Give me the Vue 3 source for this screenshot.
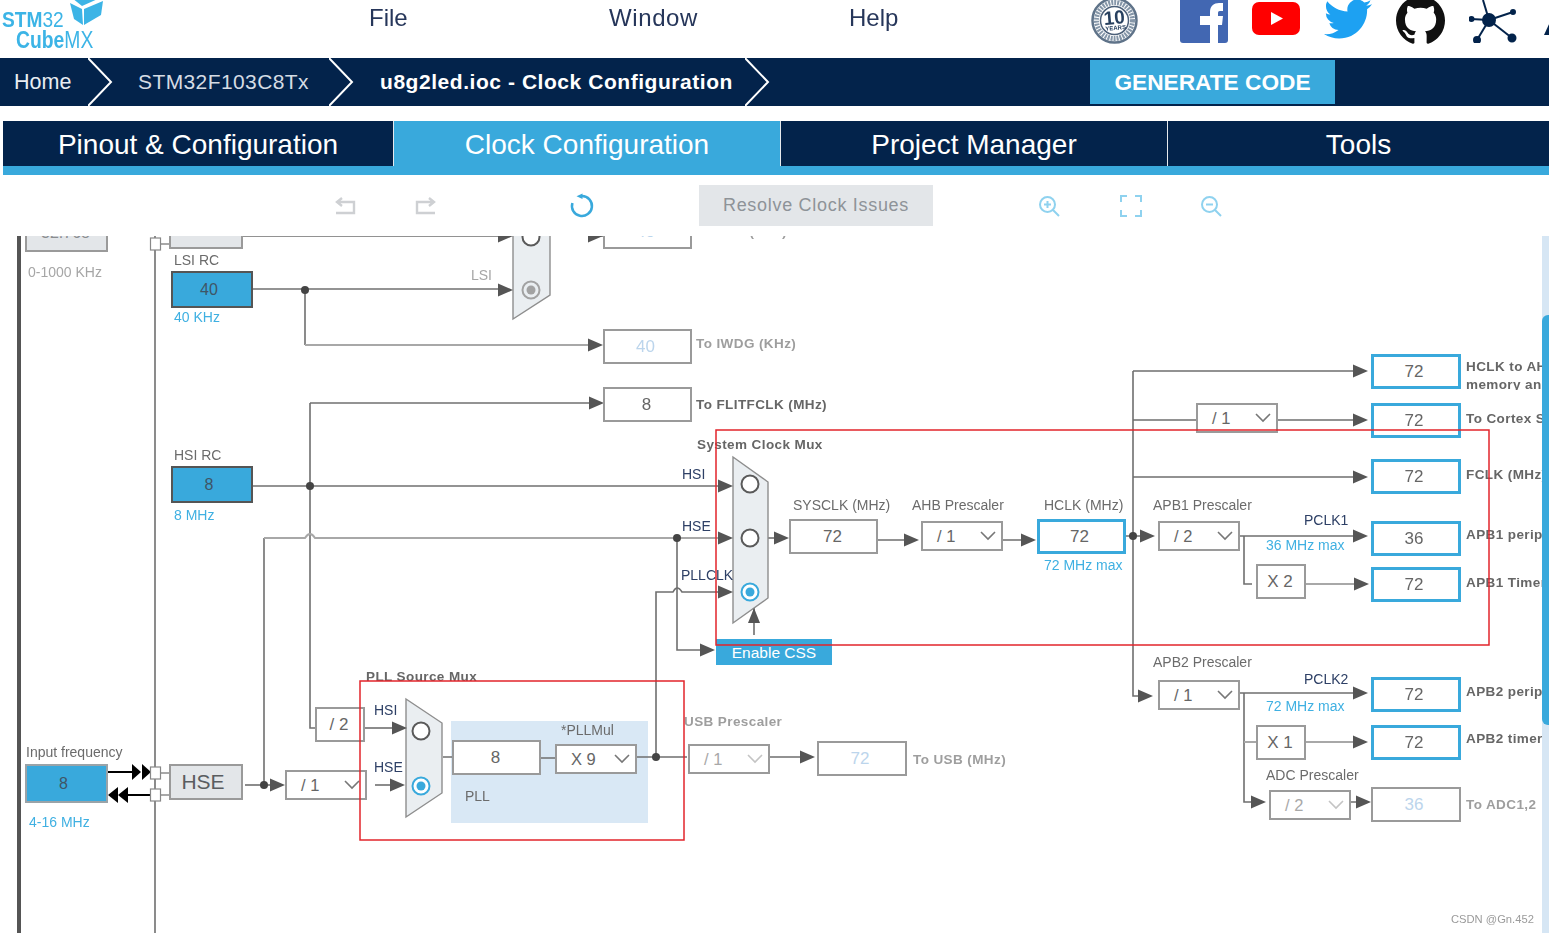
<template>
  <div class="page">
    <header class="top">
      <div class="logo">
        <svg class="cube" viewBox="0 0 36 30" width="36" height="30">
          <polygon points="1,6 13,12 14,28 5,22" fill="#3cb4e6" />
          <polygon points="15,12 34,4 32,18 15,28" fill="#3cb4e6" />
          <polygon points="3,1 13,9 31,1" fill="#3cb4e6" />
        </svg>
        <div class="logo-stm"><b>STM</b>32</div>
        <div class="logo-cube"><b>Cube</b>MX</div>
      </div>
      <nav class="menu">
        <span>File</span>
        <span class="wide">Window</span>
        <span>Help</span>
      </nav>
      <div class="social">
        <svg class="badge" viewBox="0 0 47 47" width="47" height="47">
          <circle cx="23.5" cy="23.5" r="22" fill="#fff" stroke="#5f7389" stroke-width="2.5" />
          <circle cx="23.5" cy="23.5" r="18" fill="#fff" stroke="#8596a8" stroke-width="5" stroke-dasharray="2 1" />
          <circle cx="23.5" cy="23.5" r="14" fill="#fff" stroke="#4c6079" stroke-width="1.5" />
          <g transform="rotate(-5 23.5 23.5)">
            <text x="23.5" y="27" text-anchor="middle" class="badge-num">10</text>
            <text x="24" y="33" text-anchor="middle" class="badge-sub">YEARS</text>
          </g>
        </svg>
        <svg viewBox="0 0 48 43" width="48" height="43">
          <path d="M0 0H48V40a3 3 0 0 1-3 3H3a3 3 0 0 1-3-3Z" fill="#4267b2" />
          <path d="M30 43V25H20V16H30V12C30 6 34 3 39 3H43V11H40C38 11 38 12 38 14V16H43L42 25H38V43Z" fill="#fff" />
        </svg>
        <svg viewBox="0 0 48 36" width="48" height="36">
          <rect x="0" y="2" width="48" height="33" rx="7" fill="#f00" />
          <polygon points="19,12 31,18.5 19,25" fill="#fff" />
        </svg>
        <svg class="twitter" viewBox="0 0 24 24" width="48" height="48">
          <path fill="#1da1f2" d="M23.953 4.57a10 10 0 01-2.825.775 4.958 4.958 0 002.163-2.723c-.951.555-2.005.959-3.127 1.184a4.92 4.92 0 00-8.384 4.482C7.69 8.095 4.067 6.13 1.64 3.162a4.822 4.822 0 00-.666 2.475c0 1.71.87 3.213 2.188 4.096a4.904 4.904 0 01-2.228-.616v.06a4.923 4.923 0 003.946 4.827 4.996 4.996 0 01-2.212.085 4.936 4.936 0 004.604 3.417 9.867 9.867 0 01-6.102 2.105c-.39 0-.779-.023-1.17-.067a13.995 13.995 0 007.557 2.209c9.053 0 13.998-7.496 13.998-13.985 0-.21 0-.42-.015-.63A9.935 9.935 0 0024 4.59z" />
        </svg>
        <svg class="github" viewBox="0 0 16 16" width="49" height="49">
          <path fill="#111" d="M8 0C3.58 0 0 3.58 0 8c0 3.54 2.29 6.53 5.47 7.59.4.07.55-.17.55-.38 0-.19-.01-.82-.01-1.49-2.01.37-2.53-.49-2.69-.94-.09-.23-.48-.94-.82-1.13-.28-.15-.68-.52-.01-.53.63-.01 1.08.58 1.23.82.72 1.21 1.87.87 2.33.66.07-.52.28-.87.51-1.07-1.78-.2-3.64-.89-3.64-3.95 0-.87.31-1.59.82-2.15-.08-.2-.36-1.02.08-2.12 0 0 .67-.21 2.2.82.64-.18 1.32-.27 2-.27.68 0 1.36.09 2 .27 1.53-1.04 2.2-.82 2.2-.82.44 1.1.16 1.92.08 2.12.51.56.82 1.27.82 2.15 0 3.07-1.87 3.75-3.65 3.95.29.25.54.73.54 1.48 0 1.07-.01 1.93-.01 2.2 0 .21.15.46.55.38A8.013 8.013 0 0016 8c0-4.42-3.58-8-8-8z" />
        </svg>
        <svg viewBox="0 0 49 43" width="49" height="43">
          <g stroke="#03234b" stroke-width="2" fill="#03234b">
            <line x1="20" y1="20" x2="2" y2="19" />
            <line x1="20" y1="20" x2="44" y2="12" />
            <line x1="20" y1="20" x2="43" y2="38" />
            <line x1="20" y1="20" x2="8" y2="40" />
            <line x1="20" y1="20" x2="14" y2="0" />
            <circle cx="20" cy="20" r="6" />
            <circle cx="2.5" cy="19" r="2" />
            <circle cx="44" cy="12" r="2" />
            <circle cx="43" cy="38" r="3.5" />
            <circle cx="8" cy="40" r="3" />
          </g>
        </svg>
        <svg class="st-mark" viewBox="0 0 8 36" width="8" height="36">
          <polygon points="0,35 6,22 8,22 8,35" fill="#03234b" />
        </svg>
      </div>
    </header>

    <div class="crumbs">
      <span class="crumb home">Home</span>
      <svg class="chevron" viewBox="0 0 25 48" width="25" height="48"><polyline points="0,0 23,24 0,48" /></svg>
      <span class="crumb chip">STM32F103C8Tx</span>
      <svg class="chevron" viewBox="0 0 25 48" width="25" height="48"><polyline points="0,0 23,24 0,48" /></svg>
      <span class="crumb current">u8g2led.ioc - Clock Configuration</span>
      <svg class="chevron" viewBox="0 0 25 48" width="25" height="48"><polyline points="0,0 23,24 0,48" /></svg>
      <button class="generate">GENERATE CODE</button>
    </div>

    <div class="tabs">
      <div v-for="tab in tabs" :key="tab.name" class="tab" :class="{ active: tab.active }">{{ tab.name }}</div>
    </div>

    <div class="toolbar">
      <svg class="tool-grey" viewBox="0 0 22 22" width="22" height="22">
        <path d="M8 3 3 7l5 4M3 7h17v11H2" />
      </svg>
      <svg class="tool-grey" viewBox="0 0 22 22" width="22" height="22">
        <path d="m15 3 5 4-5 4M20 7H3v11h18" />
      </svg>
      <svg class="tool-reset" viewBox="0 0 24 24" width="24" height="24">
        <path d="M11 2A10 10 0 1 1 1.4 9" />
        <polygon points="5.5,2.3 11.5,-0.5 11.5,5" fill="#39a9dc" stroke="none" />
      </svg>
      <button class="resolve">Resolve Clock Issues</button>
      <svg class="tool-blue" viewBox="0 0 22 22" width="22" height="22">
        <circle cx="9.5" cy="9.5" r="7.5" />
        <path d="m15 15 6 6M6 9.5h7M9.5 6v7" />
      </svg>
      <svg class="tool-blue" viewBox="0 0 22 22" width="22" height="22">
        <path d="M1 7V1h6M15 1h6v6M21 15v6h-6M7 21H1v-6" />
      </svg>
      <svg class="tool-blue" viewBox="0 0 22 22" width="22" height="22">
        <circle cx="9.5" cy="9.5" r="7.5" />
        <path d="m15 15 6 6M6 9.5h7" />
      </svg>
    </div>

    <div class="canvas">
      <div class="pll-area"></div>

      <svg class="layer" viewBox="0 236 1549 697" width="1549" height="697">
        <rect x="17" y="236" width="4" height="697" fill="#555" />
        <line x1="155" y1="236" x2="155" y2="933" class="wire" />
        <path v-for="w in wires" :key="w" :d="w" class="wire" />
        <path v-for="w in lightWires" :key="w" :d="w" class="wire light" />
        <polygon v-for="m in muxes" :key="m" :points="m" class="mux" />
        <polygon v-for="a in arrowPoints" :key="a" :points="a" class="head" />
        <polygon v-for="a in blackHeads" :key="a" :points="a" fill="#000" />
        <path d="M108 772H133M127 795H150" stroke="#000" stroke-width="2" fill="none" />
        <circle v-for="d in dots" :key="d.join()" :cx="d[0]" :cy="d[1]" r="4" class="dot" />
        <g v-for="r in radios" :key="r.x + '-' + r.y">
          <circle :cx="r.x" :cy="r.y" r="8.5" class="radio" :class="r.kind" />
          <circle v-if="r.kind" :cx="r.x" :cy="r.y" r="4.5" class="pip" :class="r.kind" />
        </g>
        <rect v-for="n in nodes" :key="n" x="150.5" :y="n" width="10" height="12" class="tap" />
      </svg>

      <div v-for="b in boxes" :key="b.x + '-' + b.y" class="box" :class="b.kind" :style="place(b)">{{ b.text }}</div>

      <div v-for="d in selects" :key="d.x + '-' + d.y" class="select" :class="{ off: d.off }" :style="place({ ...d, w: 82, h: 30 })">
        <span>{{ d.text }}</span>
        <svg viewBox="0 0 16 10" width="16" height="10"><polyline points="1,1 8,8 15,1" /></svg>
      </div>

      <span v-for="l in labels" :key="l.text + l.x + l.y" class="label" :class="l.kind" :style="labelAt(l)">{{ l.text }}</span>

      <div class="hclk-note">HCLK to AHB bus, core,<br />memory and DMA (MHz)</div>
      <div class="css-btn">Enable CSS</div>
      <div class="mark">CSDN @Gn.452</div>

      <svg class="layer" viewBox="0 236 1549 697" width="1549" height="697">
        <rect x="716" y="430" width="773" height="215" class="red" />
        <rect x="360" y="681" width="324" height="159" class="red" />
      </svg>

      <div class="scroll"><div class="thumb"></div></div>
    </div>
  </div>
</template>

<script setup>
import { computed } from 'vue'

const tabs = [
  { name: 'Pinout & Configuration' },
  { name: 'Clock Configuration', active: true },
  { name: 'Project Manager' },
  { name: 'Tools' }
]

// the diagram keeps screen coordinates, the canvas starts at y = 236
const TOP = 236

const wires = [
  'M253 289H505', 'M305 289V345', 'M310 403H595', 'M310 403V728H315', 'M253 486H725',
  'M365 728H395', 'M264 538V785', 'M245 785H275', 'M375 785H393', 'M677 538V650H705',
  'M656 757V592H673Q677 584 682 592H725', 'M443 757H452M541 758H555M637 757H687M769 757H805',
  'M878 540H907M1003 540H1025M1126 536H1145', 'M768 538H778',
  'M1133 371H1355M1133 420H1196M1277 420H1355M1133 477H1355', 'M1133 371V696H1140',
  'M1240 536H1355M1244 536V584H1252M1240 693H1355M1244 693V802H1255M1351 802H1358',
  'M754 635V600', 'M243 236H500M603 236H590'
]
const lightWires = [
  'M264 538H305Q310 530 315 538H725', 'M305 345H590', 'M1306 584H1355', 'M1306 742H1355', 'M1244 742H1256',
  'M160 244H169M160 773H169M160 795H169'
]

const muxes = [
  '513,210 550,232 550,295 513,319',
  '733,457 768,482 768,598 733,623',
  '406,699 442,723 442,793 406,817'
]

const arrows = [
  [513, 236], [513, 290], [603, 236], [603, 345], [604, 403], [733, 486], [733, 538], [733, 592],
  [715, 650], [407, 728], [405, 785], [285, 785], [789, 538], [919, 540], [1036, 540], [1155, 536],
  [1368, 371], [1368, 420], [1368, 477], [1368, 536], [1369, 584], [1153, 696], [1368, 693], [1368, 742],
  [1266, 802], [1371, 802], [815, 757]
]

const arrowPoints = computed(() => [
  ...arrows.map(([x, y]) => `${x},${y} ${x - 15},${y - 6.5} ${x - 15},${y + 6.5}`),
  '754,608 748,623 760,623'
])

const blackHeads = [
  '141,772 132,764 132,780', '151,772 142,764 142,780',
  '108,795 118,787 118,803', '118,795 128,787 128,803'
]

const dots = [[305, 290], [310, 486], [677, 538], [264, 785], [656, 757], [1133, 536]]

const radios = [
  { x: 531, y: 237 }, { x: 531, y: 290, kind: 'dim' },
  { x: 750, y: 484 }, { x: 750, y: 538 }, { x: 750, y: 592, kind: 'on' },
  { x: 421, y: 731 }, { x: 421, y: 786, kind: 'on' }
]

const nodes = [238, 767, 789]

const boxes = [
  { x: 25, y: 212, w: 83, h: 40, text: '32.768', kind: 'grey' },
  { x: 169, y: 212, w: 74, h: 37, text: 'LSE', kind: 'grey' },
  { x: 171, y: 271, w: 82, h: 37, text: '40', kind: 'source' },
  { x: 171, y: 466, w: 82, h: 37, text: '8', kind: 'source' },
  { x: 25, y: 764, w: 83, h: 39, text: '8', kind: 'source soft' },
  { x: 169, y: 764, w: 74, h: 36, text: 'HSE', kind: 'grey big' },
  { x: 603, y: 214, w: 89, h: 35, text: '40', kind: 'off' },
  { x: 603, y: 329, w: 89, h: 35, text: '40', kind: 'off' },
  { x: 603, y: 387, w: 89, h: 35, text: '8' },
  { x: 315, y: 707, w: 50, h: 35, text: '/ 2' },
  { x: 452, y: 740, w: 89, h: 35, text: '8' },
  { x: 789, y: 519, w: 89, h: 35, text: '72' },
  { x: 1037, y: 519, w: 89, h: 35, text: '72', kind: 'clock' },
  { x: 1371, y: 354, w: 90, h: 35, text: '72', kind: 'clock' },
  { x: 1371, y: 403, w: 90, h: 35, text: '72', kind: 'clock' },
  { x: 1371, y: 459, w: 90, h: 35, text: '72', kind: 'clock' },
  { x: 1371, y: 521, w: 90, h: 35, text: '36', kind: 'clock' },
  { x: 1371, y: 567, w: 90, h: 35, text: '72', kind: 'clock' },
  { x: 1371, y: 677, w: 90, h: 35, text: '72', kind: 'clock' },
  { x: 1371, y: 725, w: 90, h: 35, text: '72', kind: 'clock' },
  { x: 1256, y: 564, w: 50, h: 35, text: 'X 2' },
  { x: 1256, y: 725, w: 50, h: 35, text: 'X 1' },
  { x: 817, y: 741, w: 90, h: 35, text: '72', kind: 'off' },
  { x: 1371, y: 787, w: 90, h: 35, text: '36', kind: 'off' }
]

const selects = [
  { x: 285, y: 770, text: '/ 1' },
  { x: 555, y: 744, text: 'X 9' },
  { x: 688, y: 744, text: '/ 1', off: true },
  { x: 921, y: 521, text: '/ 1' },
  { x: 1196, y: 403, text: '/ 1' },
  { x: 1158, y: 521, text: '/ 2' },
  { x: 1158, y: 680, text: '/ 1' },
  { x: 1269, y: 790, text: '/ 2', off: true }
]

const labels = [
  { x: 28, y: 272, text: '0-1000 KHz', kind: 'muted' },
  { x: 174, y: 260, text: 'LSI RC' },
  { x: 174, y: 317, text: '40 KHz', kind: 'blue' },
  { x: 471, y: 275, text: 'LSI', kind: 'muted' },
  { x: 696, y: 232, text: 'To RTC (KHz)', kind: 'strong muted' },
  { x: 696, y: 344, text: 'To IWDG (KHz)', kind: 'strong muted' },
  { x: 696, y: 405, text: 'To FLITFCLK (MHz)', kind: 'strong' },
  { x: 697, y: 445, text: 'System Clock Mux', kind: 'strong' },
  { x: 174, y: 455, text: 'HSI RC' },
  { x: 174, y: 515, text: '8 MHz', kind: 'blue' },
  { x: 682, y: 474, text: 'HSI', kind: 'navy' },
  { x: 682, y: 526, text: 'HSE', kind: 'navy' },
  { x: 681, y: 575, text: 'PLLCLK', kind: 'navy' },
  { x: 793, y: 505, text: 'SYSCLK (MHz)' },
  { x: 912, y: 505, text: 'AHB Prescaler' },
  { x: 1044, y: 505, text: 'HCLK (MHz)' },
  { x: 1044, y: 565, text: '72 MHz max', kind: 'blue' },
  { x: 1153, y: 505, text: 'APB1 Prescaler' },
  { x: 1304, y: 520, text: 'PCLK1', kind: 'navy' },
  { x: 1266, y: 545, text: '36 MHz max', kind: 'blue' },
  { x: 1466, y: 419, text: 'To Cortex System timer (MHz)', kind: 'strong' },
  { x: 1466, y: 475, text: 'FCLK (MHz)', kind: 'strong' },
  { x: 1466, y: 535, text: 'APB1 peripheral clocks (MHz)', kind: 'strong' },
  { x: 1466, y: 583, text: 'APB1 Timer clocks (MHz)', kind: 'strong' },
  { x: 1153, y: 662, text: 'APB2 Prescaler' },
  { x: 1304, y: 679, text: 'PCLK2', kind: 'navy' },
  { x: 1266, y: 706, text: '72 MHz max', kind: 'blue' },
  { x: 1466, y: 692, text: 'APB2 peripheral clocks (MHz)', kind: 'strong' },
  { x: 1466, y: 739, text: 'APB2 timer clocks (MHz)', kind: 'strong' },
  { x: 1266, y: 775, text: 'ADC Prescaler' },
  { x: 1466, y: 805, text: 'To ADC1,2', kind: 'strong muted' },
  { x: 684, y: 722, text: 'USB Prescaler', kind: 'strong muted' },
  { x: 913, y: 760, text: 'To USB (MHz)', kind: 'strong muted' },
  { x: 26, y: 752, text: 'Input frequency' },
  { x: 29, y: 822, text: '4-16 MHz', kind: 'blue' },
  { x: 366, y: 677, text: 'PLL Source Mux', kind: 'strong' },
  { x: 374, y: 710, text: 'HSI', kind: 'navy' },
  { x: 374, y: 767, text: 'HSE', kind: 'navy' },
  { x: 561, y: 730, text: '*PLLMul' },
  { x: 465, y: 796, text: 'PLL' }
]

function place(n) {
  return { left: n.x + 'px', top: n.y - TOP + 'px', width: n.w + 'px', height: n.h + 'px' }
}

function labelAt(l) {
  return { left: l.x + 'px', top: l.y - 9 - TOP + 'px' }
}
</script>

<style>
html, body { margin: 0; overflow: hidden; background: #fff; }
</style>

<style scoped>
.page {
  width: 1549px;
  height: 933px;
  display: flex;
  flex-direction: column;
  overflow: hidden;
  font-family: "Liberation Sans", Arial, sans-serif;
  filter: blur(.35px);
}

/* top bar */
.top {
  height: 58px;
  display: flex;
  position: relative;
  overflow: hidden;
}
.logo {
  flex: none;
  width: 369px;
  position: relative;
  color: #3cb4e6;
}
.cube { position: absolute; left: 69px; top: -3px; }
.logo-stm, .logo-cube { position: absolute; white-space: nowrap; transform-origin: left center; }
.logo-stm { left: 2px; top: 8px; font-size: 22px; line-height: 24px; transform: scaleX(.87); }
.logo-cube { left: 16px; top: 28px; font-size: 23px; line-height: 24px; transform: scaleX(.84); }
.menu {
  flex: none;
  display: grid;
  grid-template-columns: repeat(3, 240px);
  width: 722px;
  font-size: 24px;
  line-height: 36px;
  color: #26365a;
}
.menu .wide { letter-spacing: .6px; }
.social {
  flex: none;
  display: flex;
  align-items: flex-start;
  gap: 24px;
}
.social svg { flex: none; }
.badge { margin-top: -3px; margin-right: 18px; }
.badge-num { font: bold 19px "Liberation Sans", sans-serif; fill: #27405f; }
.badge-sub { font: bold 6px "Liberation Sans", sans-serif; fill: #27405f; }
.twitter { margin-top: -5px; }
.github { margin-top: -4px; }
.st-mark { margin-left: 2px; }

/* breadcrumb */
.crumbs {
  height: 48px;
  background: #03234b;
  display: flex;
  align-items: center;
  color: #fff;
}
.crumb { font-size: 21px; white-space: nowrap; }
.home { margin-left: 14px; width: 57px; font-size: 21.5px; color: #e8edf2; }
.chip { width: 167px; letter-spacing: .4px; color: #d5dce4; }
.current { width: 353px; font-weight: bold; letter-spacing: .55px; }
.chevron { fill: none; stroke: #fff; stroke-width: 2; flex: none; }
.home + .chevron { margin: 0 25px 0 17px; }
.chip + .chevron { margin: 0 26px 0 24px; }
.current + .chevron { margin-left: 12px; }
.generate {
  margin-left: 320px;
  width: 245px;
  height: 44px;
  border: 0;
  padding: 0;
  background: #39a9dc;
  color: #fff;
  font: bold 22.7px "Liberation Sans", Arial, sans-serif;
}

/* main tabs */
.tabs {
  margin: 15px 0 0 3px;
  height: 45px;
  display: grid;
  grid-template-columns: 391px 387px 387px 1fr;
  background: #03234b;
  border-bottom: 9px solid #39a9dc;
}
.tab {
  color: #fff;
  font-size: 28px;
  line-height: 48px;
  height: 45px;
  text-align: center;
  border-right: 1px solid #e6e9ed;
}
.tab:last-child { border-right: 0; }
.tab.active { background: #39a9dc; }

/* toolbar */
.toolbar {
  height: 61px;
  box-sizing: border-box;
  padding: 10px 0 0 334px;
  display: grid;
  grid-template-columns: 80px 157px 128px 339px 82px 80px 1fr;
  align-items: center;
  align-content: start;
}
.toolbar svg { overflow: visible; }
.tool-grey { fill: none; stroke: #ced0d3; stroke-width: 2.4; }
.tool-reset { fill: none; stroke: #39a9dc; stroke-width: 2.5; }
.tool-blue { fill: none; stroke: #8fd2ef; stroke-width: 2; }
.resolve {
  width: 234px;
  height: 41px;
  border: 0;
  background: #e3e6e9;
  color: #8e9398;
  font: 18px "Liberation Sans", Arial, sans-serif;
  letter-spacing: .7px;
  padding: 0;
}

/* clock tree */
.canvas {
  position: relative;
  flex: 1;
  overflow: hidden;
}
.layer { position: absolute; left: 0; top: 0; pointer-events: none; }
.pll-area {
  position: absolute;
  left: 451px;
  top: 485px;
  width: 197px;
  height: 102px;
  background: #d9e8f5;
}
.wire { fill: none; stroke: #6f6f6f; stroke-width: 1.6; }
.wire.light { stroke: #a8a8a8; stroke-width: 2; }
.mux { fill: #eaeef1; stroke: #8e8e8e; stroke-width: 1.4; }
.head { fill: #555; }
.dot { fill: #444; }
.radio { fill: #fff; stroke: #5a5a5a; stroke-width: 2; }
.radio.on { stroke: #39a9dc; }
.radio.dim { stroke: #a2a2a2; fill: #eaeef1; }
.pip.on { fill: #39a9dc; }
.pip.dim { fill: #a2a2a2; }
.tap { fill: #fff; stroke: #888; stroke-width: 1.2; }
.red { fill: none; stroke: #e2252b; stroke-width: 1.5; }

.box {
  position: absolute;
  box-sizing: border-box;
  display: flex;
  align-items: center;
  justify-content: center;
  padding: 1px 2px 0 0;
  background: #fff;
  border: 2px solid #9a9a9a;
  color: #666;
  font-size: 17px;
}
.box.grey { background: #e3e6e9; color: #8a8d90; font-size: 16px; }
.box.big { color: #5a5d60; font-size: 21px; padding: 0 6px 0 0; }
.box.source { background: #39a9dc; border-color: #555; color: #3f5566; font-size: 16px; padding-right: 6px; }
.box.soft { border-color: #9aa3a8; }
.box.clock { border: 3px solid #39a9dc; padding-right: 4px; }
.box.off { color: #bcd5ec; padding-right: 4px; }

.select {
  position: absolute;
  box-sizing: border-box;
  display: flex;
  align-items: center;
  justify-content: space-between;
  padding: 0 5px 0 14px;
  background: #fff;
  border: 2px solid #9a9a9a;
  color: #666;
  font-size: 16.5px;
}
.select svg { fill: none; stroke: #777; stroke-width: 1.6; }
.select.off { color: #a8a8a8; }
.select.off svg { stroke: #c4c4c4; }

.label {
  position: absolute;
  font-size: 14px;
  line-height: 18px;
  white-space: nowrap;
  color: #6b6b6b;
}
.label.muted { color: #a6a6a6; }
.label.blue { color: #3fb0e2; }
.label.navy { color: #2e4066; }
.label.strong { font-weight: bold; font-size: 13.5px; letter-spacing: .4px; color: #666; }
.label.strong.muted { color: #9e9e9e; }

.hclk-note {
  position: absolute;
  left: 1466px;
  top: 122px;
  width: 100px;
  height: 32px;
  overflow: hidden;
  white-space: nowrap;
  font-weight: bold;
  font-size: 13.5px;
  letter-spacing: .4px;
  line-height: 18px;
  color: #666;
}
.css-btn {
  position: absolute;
  left: 716px;
  top: 403px;
  width: 116px;
  height: 26px;
  background: #39a9dc;
  color: #fff;
  font-size: 15.5px;
  line-height: 28px;
  text-align: center;
}
.mark {
  position: absolute;
  left: 1451px;
  top: 675px;
  font-size: 11.2px;
  line-height: 16px;
  color: #9a9a9a;
}
.scroll {
  position: absolute;
  right: 0;
  top: 0;
  bottom: 0;
  width: 7px;
  background: #d6e6f4;
}
.thumb {
  position: absolute;
  left: 0;
  right: 0;
  top: 79px;
  height: 410px;
  background: #39a9dc;
  border-radius: 6px 0 0 6px;
}
</style>
